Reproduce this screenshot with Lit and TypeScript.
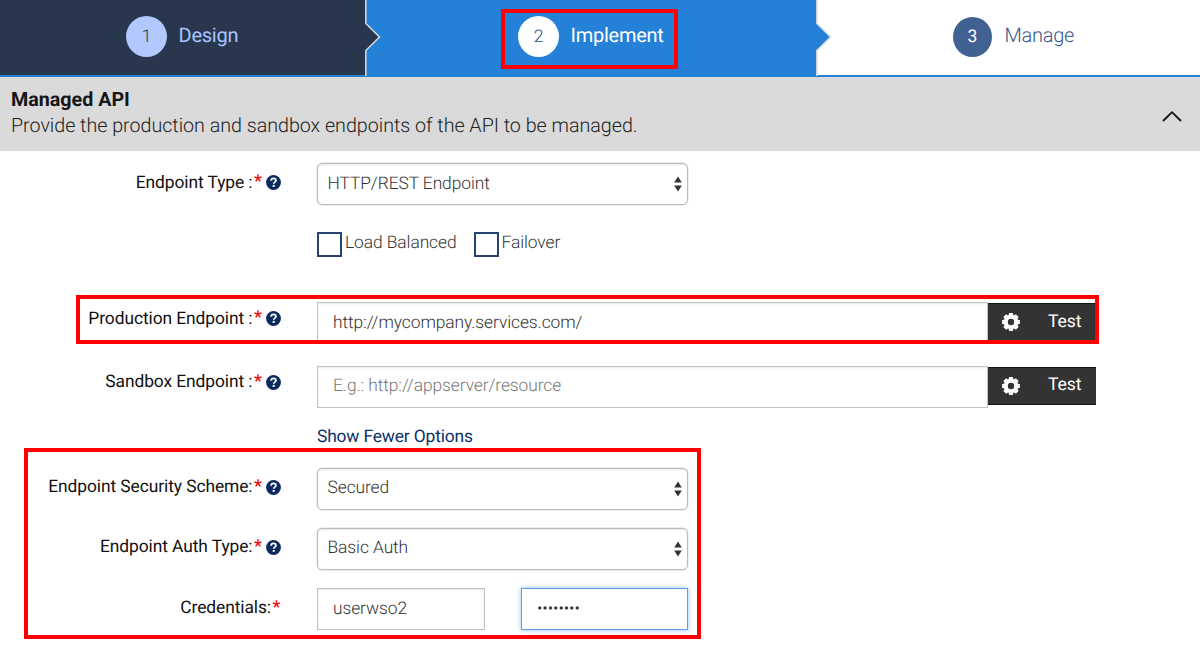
import { LitElement, html, css, svg } from "lit";
import { customElement, property } from "lit/decorators.js";

const arrows = html`<svg class="arrows" width="8" height="16" viewBox="0 0 8 16">
  <path d="M4 0.6 7.8 6.6H0.2zM4 15.4 0.2 9.4H7.8z" fill="#333" />
</svg>`;

const teeth = [0, 45, 90, 135, 180, 225, 270, 315].map(
  (a) => svg`<path d="M-1.9-8.9h3.8l.7 3.4h-5.2z" transform="rotate(${a})" fill="#fff"/>`
);
const gear = html`<svg class="gear" width="18" height="18" viewBox="-9 -9 18 18">
  ${teeth}
  <circle r="5.2" fill="none" stroke="#fff" stroke-width="4" />
</svg>`;

@customElement("form-label")
class FormLabel extends LitElement {
  @property() text = "";
  @property({ type: Boolean }) help = false;

  static styles = css`
    :host {
      display: flex;
      justify-content: flex-end;
      align-items: center;
      width: 281px;
      height: 24px;
      margin-right: 36px;
      font-size: 17.4px;
      line-height: 24px;
      color: #111;
      white-space: nowrap;
    }
    .text {
      letter-spacing: -0.08px;
      padding-top: 1px;
    }
    .star {
      color: #f00d0d;
      margin-left: 1.5px;
      width: 7.5px;
      font-size: 18px;
      font-weight: 500;
    }
    .help {
      display: block;
      margin-left: 4.5px;
      margin-top: 1px;
    }
  `;

  render() {
    return html`<span class="text">${this.text}</span><span class="star">*</span>${this.help
        ? html`<svg class="help" width="15" height="15" viewBox="0 0 15 15">
            <circle cx="7.5" cy="7.5" r="7.4" fill="#0b2a60" />
            <path d="M5.1 5.7C5.2 4.1 6.2 3.4 7.5 3.4c1.4 0 2.4.8 2.4 2 0 1.7-2.2 1.7-2.2 3.4" fill="none" stroke="#fff" stroke-width="1.8" />
            <rect x="6.7" y="9.9" width="2" height="2" fill="#fff" />
          </svg>`
        : ""}`;
  }
}

@customElement("app-root")
class AppRoot extends LitElement {
  static styles = css`
    :host {
      display: block;
      position: relative;
      width: 1200px;
      height: 646px;
      overflow: hidden;
      background: #fff;
      font-family: Roboto, sans-serif;
      text-rendering: geometricPrecision;
      color: #333;
    }
    * {
      box-sizing: border-box;
    }
    .steps {
      display: grid;
      grid-template-columns: 365px 451px 384px;
      height: 77px;
    }
    .step {
      position: relative;
      display: flex;
      align-items: flex-start;
      padding-top: 16px;
      border-bottom: 2px solid #2481d7;
      font-size: 20px;
      line-height: 40px;
      white-space: nowrap;
    }
    .design {
      background: #28374e;
      color: #abc3ff;
      padding-left: 126px;
    }
    .implement {
      background: #2481d7;
      color: #fff;
      padding-left: 153px;
    }
    .manage {
      color: #365989;
      font-weight: 300;
      padding-left: 137px;
    }
    .num {
      width: 41px;
      height: 41px;
      border-radius: 50%;
      margin-right: 11.5px;
      text-align: center;
      font-size: 17.5px;
      line-height: 42px;
      font-weight: 300;
    }
    .design .num {
      background: #b2c8ff;
      color: #28374e;
    }
    .implement .num {
      background: #fff;
      color: #2a4980;
    }
    .manage .num {
      background: #416193;
      color: #fff;
      width: 39px;
      height: 40px;
      margin-top: 1px;
      line-height: 40px;
      margin-right: 12.5px;
      font-weight: 400;
    }
    .title {
      line-height: 39px;
      letter-spacing: -0.25px;
    }
    .notch {
      position: absolute;
      left: 100%;
      top: 0;
      z-index: 1;
    }
    .section {
      display: flex;
      justify-content: space-between;
      height: 74px;
      background: #dadada;
      padding: 10px 18px 0 11px;
      color: #222;
      font-size: 19.7px;
      line-height: 27px;
      white-space: nowrap;
    }
    .heading {
      font-weight: 700;
      color: #161616;
      line-height: 25px;
    }
    .sub {
      font-weight: 300;
      letter-spacing: -0.02px;
    }
    .chevron {
      margin-top: 23px;
    }
    .row {
      display: flex;
      align-items: flex-start;
      font-weight: 300;
      font-size: 17.4px;
      letter-spacing: -0.08px;
      white-space: nowrap;
    }
    .row form-label {
      font-weight: 400;
      flex: none;
    }
    .select {
      display: flex;
      justify-content: space-between;
      align-items: center;
      width: 371px;
      height: 42px;
      padding: 0 5px 1px 9.5px;
      border: 1px solid #bbb;
      box-shadow: 0 0 0 0.5px #ddd, inset 0 1px 2px rgba(0, 0, 0, 0.09);
      border-radius: 5px;
    }
    .arrows {
      margin-top: 1px;
    }
    .input {
      display: flex;
      align-items: center;
      height: 42px;
      padding: 0 0 1px 15px;
      border: 1px solid #c2c2c2;
      box-shadow: inset 0 1px 2px rgba(0, 0, 0, 0.09);
    }
    .url {
      width: 671px;
    }
    .hint {
      color: #777;
    }
    .test {
      display: flex;
      align-items: center;
      width: 108px;
      height: 38px;
      margin-top: 1px;
      padding-left: 14px;
      background: #333;
      border-top: 1px solid #161616;
      border-bottom: 1px solid #161616;
      color: #fff;
      font-weight: 400;
      font-size: 17.6px;
    }
    .test span {
      margin-top: -1px;
    }
    .gear {
      margin-right: 28px;
    }
    .type {
      padding-top: 12px;
    }
    .type form-label {
      margin-top: 7px;
    }
    .checks {
      height: 26px;
      margin-top: 27px;
      padding-left: 317px;
      line-height: 23px;
    }
    .box {
      width: 25px;
      height: 25px;
      border: 2px solid #24436f;
      margin-right: 3px;
    }
    .balanced {
      width: 128.5px;
    }
    .production {
      margin-top: 44px;
    }
    .production form-label {
      margin-top: 4px;
    }
    .sandbox form-label {
      margin-top: 4px;
    }
    .sandbox {
      margin-top: 21.5px;
    }
    .link {
      margin-top: 17.5px;
      padding-left: 317px;
      line-height: 24px;
      font-size: 17.4px;
      letter-spacing: -0.15px;
      color: #0b2f66;
      height: 24px;
    }
    .scheme {
      margin-top: 18.5px;
    }
    .scheme form-label,
    .auth form-label {
      margin-top: 7px;
    }
    .auth {
      margin-top: 18px;
    }
    .credentials {
      margin-top: 18px;
    }
    .credentials form-label {
      margin-top: 8px;
      margin-right: 36px;
      position: relative;
      left: -1px;
    }
    .credentials .input {
      padding-bottom: 0;
    }
    .user {
      width: 168px;
      margin-right: 36px;
    }
    .password {
      width: 167px;
      border-color: #5c9ee6;
      box-shadow: 0 0 5px rgba(82, 150, 225, 0.6);
      font-size: 16.8px;
    }
    .mark {
      position: absolute;
      border: 4px solid #fe0000;
      z-index: 2;
    }
    .mark-step {
      left: 501px;
      top: 9px;
      width: 177px;
      height: 60px;
    }
    .mark-endpoint {
      left: 76px;
      top: 295px;
      width: 1023px;
      height: 49px;
    }
    .mark-security {
      left: 24px;
      top: 448px;
      width: 677px;
      height: 191px;
    }
  `;

  notch(fill: string, line: string) {
    return html`<svg class="notch" width="16" height="76" viewBox="0 0 16 76">
      <path d="M0 0H.8V23.5L14.5 37 .8 50.5V76H0z" fill=${fill} />
      <path d="M.8 0V23.5L14.5 37 .8 50.5V76" fill="none" stroke=${line} stroke-width="1.5" />
    </svg>`;
  }

  select(value: string) {
    return html`<div class="select"><span>${value}</span>${arrows}</div>`;
  }

  render() {
    return html`
      <div class="steps">
        <div class="step design"><span class="num">1</span><span class="title">Design</span>${this.notch("#28374e", "#d5d8dd")}</div>
        <div class="step implement"><span class="num">2</span><span class="title">Implement</span>${this.notch("#2481d7", "#d5d8dd")}</div>
        <div class="step manage"><span class="num">3</span><span class="title">Manage</span></div>
      </div>
      <div class="section">
        <div>
          <div class="heading">Managed API</div>
          <div class="sub">Provide the production and sandbox endpoints of the API to be managed.</div>
        </div>
        <svg class="chevron" width="20" height="13" viewBox="0 0 20 13">
          <path d="M1 11 10 2.2 19 11" fill="none" stroke="#111" stroke-width="1.8" />
        </svg>
      </div>
      <div class="row type"><form-label text="Endpoint Type :" help></form-label>${this.select("HTTP/REST Endpoint")}</div>
      <div class="row checks">
        <span class="box"></span><span class="balanced">Load Balanced</span>
        <span class="box"></span><span>Failover</span>
      </div>
      <div class="row production">
        <form-label text="Production Endpoint :" help></form-label>
        <div class="input url">http://mycompany.services.com/</div>
        <div class="test">${gear}<span>Test</span></div>
      </div>
      <div class="row sandbox">
        <form-label text="Sandbox Endpoint :" help></form-label>
        <div class="input url hint">E.g.: http://appserver/resource</div>
        <div class="test">${gear}<span>Test</span></div>
      </div>
      <div class="link">Show Fewer Options</div>
      <div class="row scheme"><form-label text="Endpoint Security Scheme:" help></form-label>${this.select("Secured")}</div>
      <div class="row auth"><form-label text="Endpoint Auth Type:" help></form-label>${this.select("Basic Auth")}</div>
      <div class="row credentials">
        <form-label text="Credentials:"></form-label>
        <div class="input user">userwso2</div>
        <div class="input password">••••••••</div>
      </div>
      <div class="mark mark-step"></div>
      <div class="mark mark-endpoint"></div>
      <div class="mark mark-security"></div>
    `;
  }
}
